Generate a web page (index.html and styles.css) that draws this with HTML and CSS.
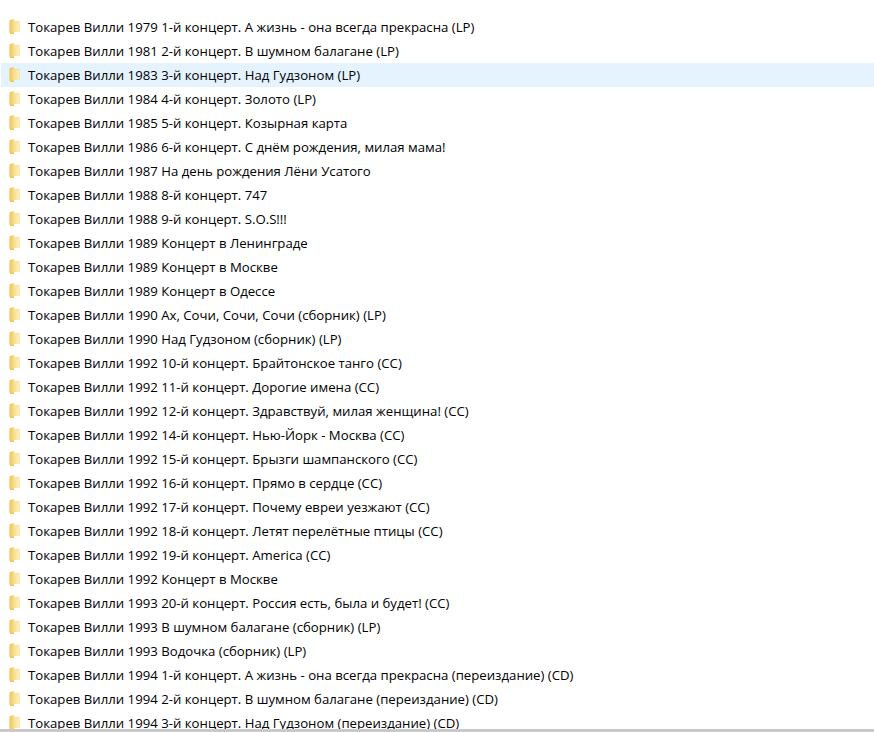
FILE: index.html
```html
<!DOCTYPE html>
<html lang="ru">
<head>
<meta charset="utf-8">
<title>Папки</title>
<link rel="stylesheet" href="styles.css">
</head>
<body>
<svg class="defs" width="0" height="0" aria-hidden="true">
  <defs>
    <linearGradient id="fg" x1="0" y1="0" x2="1" y2="0">
      <stop offset="0" stop-color="#f9dc82"/>
      <stop offset="1" stop-color="#fdf0bd"/>
    </linearGradient>
    <linearGradient id="ff" x1="0" y1="0" x2="1" y2="0">
      <stop offset="0" stop-color="#f3c65a"/>
      <stop offset="1" stop-color="#fbe294"/>
    </linearGradient>
    <symbol id="folder" viewBox="0 0 11 16">
      <path d="M0.5 1.5 L3 0.5 H5 V2.5 H10.5 V13 H5 V15 H3 L0.5 14 Z" fill="#e9bd52"/>
      <path d="M4 3 H10.5 V13 H4 Z" fill="url(#fg)"/>
      <path d="M1 1.8 L5.5 0.8 V13.2 L1 14.8 Z" fill="url(#ff)"/>
    </symbol>
  </defs>
</svg>
<main class="list">
  <div class="row"><svg class="icon"><use href="#folder"/></svg><span>Токарев Вилли 1979 1-й концерт. А жизнь - она всегда прекрасна (LP)</span></div>
  <div class="row"><svg class="icon"><use href="#folder"/></svg><span>Токарев Вилли 1981 2-й концерт. В шумном балагане (LP)</span></div>
  <div class="row hover"><svg class="icon"><use href="#folder"/></svg><span>Токарев Вилли 1983 3-й концерт. Над Гудзоном (LP)</span></div>
  <div class="row"><svg class="icon"><use href="#folder"/></svg><span>Токарев Вилли 1984 4-й концерт. Золото (LP)</span></div>
  <div class="row"><svg class="icon"><use href="#folder"/></svg><span>Токарев Вилли 1985 5-й концерт. Козырная карта</span></div>
  <div class="row"><svg class="icon"><use href="#folder"/></svg><span>Токарев Вилли 1986 6-й концерт. С днём рождения, милая мама!</span></div>
  <div class="row"><svg class="icon"><use href="#folder"/></svg><span>Токарев Вилли 1987 На день рождения Лёни Усатого</span></div>
  <div class="row"><svg class="icon"><use href="#folder"/></svg><span>Токарев Вилли 1988 8-й концерт. 747</span></div>
  <div class="row"><svg class="icon"><use href="#folder"/></svg><span>Токарев Вилли 1988 9-й концерт. S.O.S!!!</span></div>
  <div class="row"><svg class="icon"><use href="#folder"/></svg><span>Токарев Вилли 1989 Концерт в Ленинграде</span></div>
  <div class="row"><svg class="icon"><use href="#folder"/></svg><span>Токарев Вилли 1989 Концерт в Москве</span></div>
  <div class="row"><svg class="icon"><use href="#folder"/></svg><span>Токарев Вилли 1989 Концерт в Одессе</span></div>
  <div class="row"><svg class="icon"><use href="#folder"/></svg><span>Токарев Вилли 1990 Ах, Сочи, Сочи, Сочи (сборник) (LP)</span></div>
  <div class="row"><svg class="icon"><use href="#folder"/></svg><span>Токарев Вилли 1990 Над Гудзоном (сборник) (LP)</span></div>
  <div class="row"><svg class="icon"><use href="#folder"/></svg><span>Токарев Вилли 1992 10-й концерт. Брайтонское танго (CC)</span></div>
  <div class="row"><svg class="icon"><use href="#folder"/></svg><span>Токарев Вилли 1992 11-й концерт. Дорогие имена (CC)</span></div>
  <div class="row"><svg class="icon"><use href="#folder"/></svg><span>Токарев Вилли 1992 12-й концерт. Здравствуй, милая женщина! (CC)</span></div>
  <div class="row"><svg class="icon"><use href="#folder"/></svg><span>Токарев Вилли 1992 14-й концерт. Нью-Йорк - Москва (CC)</span></div>
  <div class="row"><svg class="icon"><use href="#folder"/></svg><span>Токарев Вилли 1992 15-й концерт. Брызги шампанского (CC)</span></div>
  <div class="row"><svg class="icon"><use href="#folder"/></svg><span>Токарев Вилли 1992 16-й концерт. Прямо в сердце (CC)</span></div>
  <div class="row"><svg class="icon"><use href="#folder"/></svg><span>Токарев Вилли 1992 17-й концерт. Почему евреи уезжают (CC)</span></div>
  <div class="row"><svg class="icon"><use href="#folder"/></svg><span>Токарев Вилли 1992 18-й концерт. Летят перелётные птицы (CC)</span></div>
  <div class="row"><svg class="icon"><use href="#folder"/></svg><span>Токарев Вилли 1992 19-й концерт. America (CC)</span></div>
  <div class="row"><svg class="icon"><use href="#folder"/></svg><span>Токарев Вилли 1992 Концерт в Москве</span></div>
  <div class="row"><svg class="icon"><use href="#folder"/></svg><span>Токарев Вилли 1993 20-й концерт. Россия есть, была и будет! (CC)</span></div>
  <div class="row"><svg class="icon"><use href="#folder"/></svg><span>Токарев Вилли 1993 В шумном балагане (сборник) (LP)</span></div>
  <div class="row"><svg class="icon"><use href="#folder"/></svg><span>Токарев Вилли 1993 Водочка (сборник) (LP)</span></div>
  <div class="row"><svg class="icon"><use href="#folder"/></svg><span>Токарев Вилли 1994 1-й концерт. А жизнь - она всегда прекрасна (переиздание) (CD)</span></div>
  <div class="row"><svg class="icon"><use href="#folder"/></svg><span>Токарев Вилли 1994 2-й концерт. В шумном балагане (переиздание) (CD)</span></div>
  <div class="row"><svg class="icon"><use href="#folder"/></svg><span>Токарев Вилли 1994 3-й концерт. Над Гудзоном (переиздание) (CD)</span></div>
</main>
<div class="bottom-bar"></div>
</body>
</html>
```
FILE: styles.css
```css
html, body {
  margin: 0;
  height: 100%;
  background: #fff;
}
body {
  display: flex;
  flex-direction: column;
  height: 732px;
  overflow: hidden;
  font-family: "Open Sans", "Noto Sans", sans-serif;
  font-size: 13.2px;
  color: #000;
}
.defs {
  position: absolute;
}
.list {
  flex: 1;
  min-height: 0;
  overflow: hidden;
  padding: 15px 0 0 1px;
}
.row {
  display: flex;
  align-items: center;
  height: 24px;
  padding-left: 8px;
  white-space: nowrap;
}
.hover {
  background: #e5f3ff;
}
.icon {
  width: 11px;
  height: 16px;
  margin-right: 8px;
  flex: none;
}
.bottom-bar {
  height: 3px;
  background: #c9c9c9;
  flex: none;
}
```
